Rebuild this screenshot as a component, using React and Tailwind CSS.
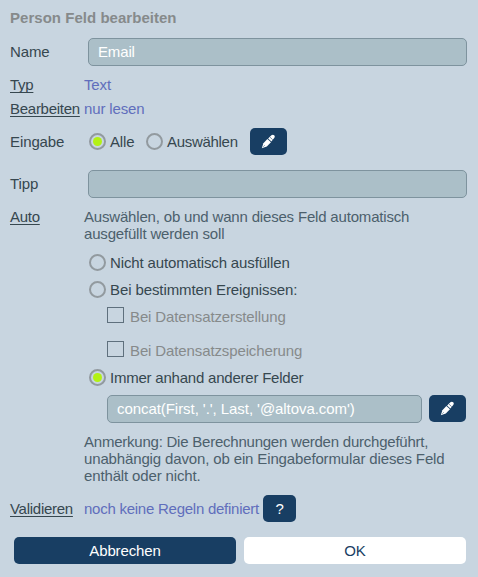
function PenIcon() {
  return (
    <svg width="15" height="15" viewBox="0 0 15 15" fill="#fff">
      <path d="M0.8 14.2 L2.4 9.2 L6.4 4.9 L10 8.2 L5.8 12.5 Z" />
      <path d="M7.1 4.5 L10.4 1.3 C11.2 0.5 12.4 0.5 13.2 1.3 C14 2.1 14 3.2 13.2 4.1 L10.4 7.5 Z" />
      <path d="M9 3.2 L11.7 5.7" stroke="#183e63" strokeWidth="0.6" />
      <path d="M1.8 13.2 L4 11" stroke="#183e63" strokeWidth="0.4" />
    </svg>
  );
}

function Radio({ label, checked, className = '' }) {
  return (
    <label className="flex items-center gap-1">
      <span className="flex h-[17px] w-[17px] items-center justify-center rounded-full border-2 border-[#929a9f]">
        {checked && <span className="h-[9px] w-[9px] rounded-full bg-[#b3f114]"></span>}
      </span>
      <span className={className}>{label}</span>
    </label>
  );
}

function Checkbox({ label }) {
  return (
    <label className="flex h-[34px] items-center gap-1.5 pl-[23px] tracking-[-0.12px] text-[#868a8b]">
      <span className="h-4 w-[17px] border border-[#5f707d]"></span>
      <span className="pt-0.5">{label}</span>
    </label>
  );
}

function Field({ value, className }) {
  return (
    <input
      type="text"
      defaultValue={value}
      className={`h-7 rounded-[5px] border border-[#7e939e] bg-[#abbfc8] px-[9px] pb-px text-white outline-none ${className}`}
    />
  );
}

function PenButton() {
  return (
    <button className="flex h-[27px] w-[37px] items-center justify-center rounded-[5px] bg-[#183e63]">
      <PenIcon />
    </button>
  );
}

function Label({ children, link }) {
  return (
    <div className="w-[74px] shrink-0 whitespace-nowrap">
      <span
        className={
          link
            ? 'tracking-[-0.27px] underline decoration-1 underline-offset-2 [text-decoration-skip-ink:none]'
            : 'tracking-[-0.1px]'
        }
      >
        {children}
      </span>
    </div>
  );
}

export default function App() {
  return (
    <div className="h-[577px] w-[478px] bg-[#c8d5e0] pl-2.5 font-['Liberation_Sans',Arial,sans-serif] text-[15px] leading-[17px] tracking-[-0.14px] text-[#36474f]">
      <h1 className="mb-0.5 flex h-[34px] items-center font-bold tracking-[0.03px] text-[#868a8b]">
        Person Feld bearbeiten
      </h1>

      <div className="flex h-9 items-start pt-0.5">
        <div className="flex h-[27px] items-center">
          <Label>Name</Label>
        </div>
        <Field value="Email" className="ml-1 w-[379px]" />
      </div>

      <div className="flex h-6 items-center">
        <Label link>Typ</Label>
        <span className="text-[#606ebc]">Text</span>
      </div>
      <div className="flex h-6 items-center">
        <Label link>Bearbeiten</Label>
        <span className="text-[#606ebc]">nur lesen</span>
      </div>

      <div className="flex h-[43px] items-center">
        <Label>Eingabe</Label>
        <div className="ml-[5px] flex items-center">
          <Radio label="Alle" checked className="w-6" />
          <span className="w-3"></span>
          <Radio label="Auswählen" className="w-[71px] tracking-[-0.3px]" />
          <span className="w-3"></span>
          <PenButton />
        </div>
      </div>

      <div className="mb-0.5 flex h-[41px] items-center">
        <Label>Tipp</Label>
        <Field value="" className="ml-1 w-[379px]" />
      </div>

      <div className="flex">
        <div className="pt-0.5">
          <Label link>Auto</Label>
        </div>
        <div className="pt-0.5">
          <p className="tracking-[-0.18px] text-[#4c606c]">
            Auswählen, ob und wann dieses Feld automatisch
            <br />
            ausgefüllt werden soll
          </p>
          <div className="flex flex-col gap-2.5 pt-3 pl-[5px]">
            <Radio label="Nicht automatisch ausfüllen" />
            <Radio label="Bei bestimmten Ereignissen:" className="tracking-[-0.1px]" />
          </div>
          <Checkbox label="Bei Datensatzerstellung" />
          <Checkbox label="Bei Datensatzspeicherung" />
          <div className="pt-[3px] pl-[5px]">
            <Radio label="Immer anhand anderer Felder" checked className="tracking-[-0.22px]" />
          </div>
          <div className="flex gap-[7px] pt-[9px] pl-[23px]">
            <Field value="concat(First, '.', Last, '@altova.com')" className="w-[315px] tracking-[-0.06px]" />
            <PenButton />
          </div>
          <p className="pt-2.5 text-[#4c606c]">
            <span className="tracking-[-0.23px]">Anmerkung: Die Berechnungen werden durchgeführt,</span>
            <br />
            unabhängig davon, ob ein Eingabeformular dieses Feld
            <br />
            enthält oder nicht.
          </p>
        </div>
      </div>

      <div className="flex items-center pt-[11px]">
        <Label link>Validieren</Label>
        <span className="w-[179px] tracking-[-0.25px] whitespace-nowrap text-[#606ebc]">
          noch keine Regeln definiert
        </span>
        <button className="h-[27px] w-[33px] rounded-[5px] bg-[#183e63] text-white">?</button>
      </div>

      <div className="flex gap-2 pt-[15px] pl-1">
        <button className="h-[27px] w-[222px] rounded-[5px] bg-[#183e63] text-white">Abbrechen</button>
        <button className="h-[27px] w-[222px] rounded-[5px] bg-white text-[#183e63]">OK</button>
      </div>
    </div>
  );
}
